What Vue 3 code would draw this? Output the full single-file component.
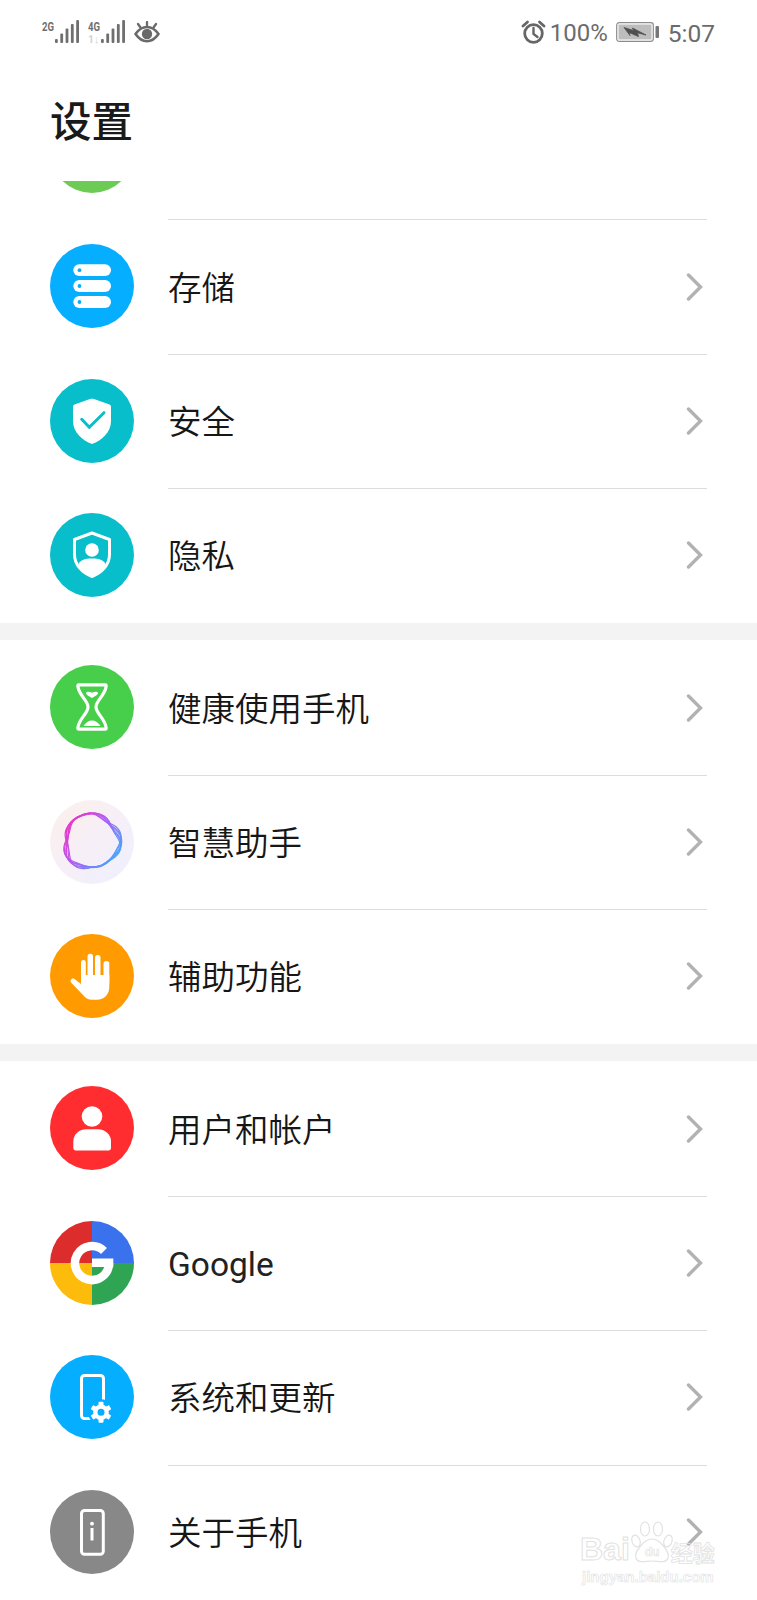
<template>
  <div class="page">
    <div class="status">
      <div class="status-left">
        <svg class="signal" width="38" height="28" viewBox="0 -4 38 28">
          <text x="0" y="10.500" class="net" textLength="12" lengthAdjust="spacingAndGlyphs">2G</text>
          <rect v-for="b in bars" :key="b.x" :x="b.x" :y="b.y" width="2.800" :height="23 - b.y" rx="1" />
        </svg>
        <svg class="signal" width="38" height="28" viewBox="0 -4 38 28">
          <text x="0" y="10.500" class="net" textLength="12" lengthAdjust="spacingAndGlyphs">4G</text>
          <text x="0" y="22.500" class="net net-faint" textLength="11" lengthAdjust="spacingAndGlyphs">1↓</text>
          <rect v-for="b in bars" :key="b.x" :x="b.x" :y="b.y" width="2.800" :height="23 - b.y" rx="1" />
        </svg>
        <svg width="26" height="22" viewBox="0 0 26 22">
          <path d="M1.500 13C5 8 9 6 13 6 17 6 21 8 24.500 13 21 18 17 20.300 13 20.300 9 20.300 5 18 1.500 13Z" fill="none" stroke="#6a6a6a" stroke-width="2.600" stroke-linejoin="round" />
          <circle cx="13" cy="13" r="5.200" fill="#6a6a6a" />
          <path d="M13 5V1M6.500 6.500 4 3M19.500 6.500 22 3" stroke="#6a6a6a" stroke-width="2.300" stroke-linecap="round" />
        </svg>
      </div>
      <div class="status-right">
        <svg width="25" height="24" viewBox="0 0 25 24">
          <circle cx="12.500" cy="13.500" r="8.800" fill="none" stroke="#666" stroke-width="2.800" />
          <path d="M12.500 8v6l4 3" fill="none" stroke="#666" stroke-width="2.400" stroke-linecap="round" />
          <path d="M2 6 6.500 2M23 6 18.500 2" stroke="#666" stroke-width="2.800" stroke-linecap="round" />
        </svg>
        <span class="pct">100%</span>
        <svg class="battery" width="44" height="20" viewBox="0 0 44 20">
          <rect x="0.700" y="0.700" width="36.600" height="18.600" rx="2.500" fill="#fff" stroke="#8c8c8c" stroke-width="1.200" />
          <rect x="2.500" y="2.500" width="33" height="15" fill="#bdbdbd" />
          <path d="M8 5.500 17.500 8.500 16.500 6 30 13 21.500 10.800 22.500 14.500 13 10.500 14 13.500Z" fill="#4f4f4f" stroke="#4f4f4f" stroke-width="0.800" stroke-linejoin="round" />
          <rect x="39.500" y="4" width="3.500" height="12" rx="1" fill="#777" />
        </svg>
        <span class="time">5:07</span>
      </div>
    </div>

    <h1 class="title">设置</h1>

    <div class="list">
      <div class="row row-cut">
        <div class="icon-cut"></div>
        <div class="row-body"></div>
      </div>

      <template v-for="(group, g) in groups" :key="g">
        <div v-if="g > 0" class="band"></div>
        <div v-for="(item, i) in group" :key="item.name" class="row">
          <svg class="icon" width="84" height="84" viewBox="0 0 84 84">
            <!-- storage -->
            <template v-if="item.icon === 'storage'">
              <circle cx="42" cy="42" r="42" fill="#05aeff" />
              <rect x="23.300" y="20.300" width="37.700" height="11.700" rx="5.800" fill="#fff" />
              <rect x="23.300" y="36" width="37.700" height="12" rx="6" fill="#fff" />
              <rect x="23.300" y="52" width="37.700" height="12" rx="6" fill="#fff" />
              <circle cx="29.500" cy="26.200" r="1.900" fill="#05aeff" />
              <circle cx="29.500" cy="42" r="1.900" fill="#05aeff" />
              <circle cx="29.500" cy="58" r="1.900" fill="#05aeff" />
            </template>
            <!-- security -->
            <template v-else-if="item.icon === 'security'">
              <circle cx="42" cy="42" r="42" fill="#08becb" />
              <path d="M40 20 24.500 25.500C23.500 26 23 26.800 23 28V42C23 53 32 61.500 42 65 52 61.500 61 53 61 42V28C61 26.800 60.500 26 59.500 25.500L44 20C42.500 19.500 41.500 19.500 40 20Z" fill="#fff" />
              <path d="M31.700 40.300 39.300 48.300 54 33.700" fill="none" stroke="#08becb" stroke-width="3" stroke-linecap="round" stroke-linejoin="round" />
            </template>
            <!-- privacy -->
            <template v-else-if="item.icon === 'privacy'">
              <circle cx="42" cy="42" r="42" fill="#08becb" />
              <path d="M42 20 59.500 26.500V41.500C59.500 52 51.500 60 42 63.500 32.500 60 24.500 52 24.500 41.500V26.500Z" fill="none" stroke="#fff" stroke-width="3" stroke-linejoin="round" />
              <circle cx="42" cy="37" r="6.800" fill="#fff" />
              <path d="M28 53C29 47 35 45.500 42 45.500 49 45.500 55 47 56 53 52 58.500 47 62 42 64 37 62 32 58.500 28 53Z" fill="#fff" />
            </template>
            <!-- hourglass -->
            <template v-else-if="item.icon === 'hourglass'">
              <circle cx="42" cy="42" r="42" fill="#47cf4b" />
              <path d="M29 19.800H55C56 19.800 56.500 20.500 56 22 54.500 31 46 35.500 46 42 46 48.500 54.500 53 56 62 56.500 63.500 56 64.200 55 64.200H29C28 64.200 27.500 63.500 28 62 29.500 53 38 48.500 38 42 38 35.500 29.500 31 28 22 27.500 20.500 28 19.800 29 19.800Z" fill="none" stroke="#fff" stroke-width="3.200" stroke-linejoin="round" />
              <path d="M42 33C38.500 31 35.500 29.500 36 27.800 37 26 40 26.500 42 27.800 44 26.500 47 26 48 27.800 48.500 29.500 45.500 31 42 33Z" fill="#fff" />
              <path d="M33.500 61C35.500 57.500 39 55.500 42 55.500 45 55.500 48.500 57.500 50.500 61Z" fill="#fff" />
            </template>
            <!-- assistant -->
            <template v-else-if="item.icon === 'assistant'">
              <defs>
                <linearGradient id="assistBg" x1="0" y1="0" x2="1" y2="1">
                  <stop offset="0" stop-color="#fbf0e8" />
                  <stop offset="0.5" stop-color="#f7eff8" />
                  <stop offset="1" stop-color="#ecf0fd" />
                </linearGradient>
                <linearGradient id="assistRing" gradientUnits="userSpaceOnUse" x1="14" y1="20" x2="70" y2="62">
                  <stop offset="0" stop-color="#f62cc0" />
                  <stop offset="0.45" stop-color="#b05cf0" />
                  <stop offset="1" stop-color="#35b0ff" />
                </linearGradient>
              </defs>
              <circle cx="42" cy="42" r="42" fill="url(#assistBg)" />
              <path v-for="(d, r) in ringLines" :key="r" :d="d" fill="none" stroke="url(#assistRing)" stroke-width="1.200" stroke-linejoin="round" />
            </template>
            <!-- hand -->
            <template v-else-if="item.icon === 'hand'">
              <circle cx="42" cy="42" r="42" fill="#ff9a00" />
              <rect x="31" y="26" width="4.800" height="24" rx="2.400" fill="#fff" />
              <rect x="37.500" y="19.700" width="5.500" height="28" rx="2.700" fill="#fff" />
              <rect x="45" y="21" width="5.500" height="28" rx="2.700" fill="#fff" />
              <rect x="53.500" y="27" width="5.800" height="24" rx="2.800" fill="#fff" />
              <path d="M31 41H59.300V53C59.300 60.500 54 65.700 47 65.700H42C38 65.700 35.500 64 33 61L21 48.500C19.500 46.500 22 43.500 24.500 45L31 50Z" fill="#fff" />
            </template>
            <!-- person -->
            <template v-else-if="item.icon === 'person'">
              <circle cx="42" cy="42" r="42" fill="#ff2d30" />
              <circle cx="42" cy="30.500" r="10.300" fill="#fff" />
              <path d="M23.300 62V55C23.300 48 30 43.300 36 43.300H48C54 43.300 61 48 61 55V62C61 63.500 60 64.500 58.500 64.500H25.800C24.300 64.500 23.300 63.500 23.300 62Z" fill="#fff" />
            </template>
            <!-- google -->
            <template v-else-if="item.icon === 'google'">
              <path d="M42 42V0A42 42 0 0 0 0 42Z" fill="#dd2c2c" />
              <path d="M42 42V0A42 42 0 0 1 84 42Z" fill="#3a72ee" />
              <path d="M42 42H0A42 42 0 0 0 42 84Z" fill="#fdbc0b" />
              <path d="M42 42H84A42 42 0 0 1 42 84Z" fill="#2fa553" />
              <path d="M54 30A17 17 0 1 0 59 42" fill="none" stroke="#fff" stroke-width="8.500" />
              <rect x="42" y="37.500" width="21.300" height="8.500" fill="#fff" />
            </template>
            <!-- system -->
            <template v-else-if="item.icon === 'system'">
              <circle cx="42" cy="42" r="42" fill="#05aeff" />
              <rect x="31.500" y="20.500" width="22" height="43" rx="3" fill="none" stroke="#fff" stroke-width="3" />
              <circle cx="51" cy="57.300" r="13" fill="#05aeff" />
              <rect v-for="a in gearTeeth" :key="a" x="48.500" y="46.800" width="5" height="21" rx="1" fill="#fff" :transform="`rotate(${a} 51 57.300)`" />
              <circle cx="51" cy="57.300" r="7.800" fill="#fff" />
              <circle cx="51" cy="57.300" r="3.500" fill="#05aeff" />
            </template>
            <!-- about -->
            <template v-else>
              <circle cx="42" cy="42" r="42" fill="#888" />
              <rect x="31.500" y="20.500" width="21.800" height="43.700" rx="3" fill="none" stroke="#fff" stroke-width="3" />
              <circle cx="42" cy="33.700" r="1.900" fill="#fff" />
              <rect x="40.500" y="38" width="3" height="12.500" fill="#fff" />
            </template>
          </svg>
          <div class="row-body" :class="{ 'row-body--last': i === group.length - 1 }">
            <span class="name" :class="{ 'name--latin': item.name === 'Google' }">{{ item.name }}</span>
            <svg class="chev" width="17" height="28" viewBox="0 0 17 28">
              <path d="M2.500 2 14.500 14 2.500 26" fill="none" stroke="#b2b2b2" stroke-width="3.400" stroke-linecap="round" stroke-linejoin="miter" />
            </svg>
          </div>
        </div>
      </template>
    </div>

    <div class="watermark">
      <div class="wm-top">
        <span class="wm-big">Bai</span>
        <svg width="44" height="46" viewBox="0 0 44 46">
          <g fill="none" stroke="#e2e2e2" stroke-width="1.200">
            <ellipse cx="6" cy="22" rx="4" ry="6" transform="rotate(-20 6 22)" />
            <ellipse cx="15" cy="10" rx="4.500" ry="7" />
            <ellipse cx="28" cy="10" rx="4.500" ry="7" />
            <ellipse cx="38" cy="22" rx="4" ry="6" transform="rotate(20 38 22)" />
            <path d="M22 20C30 20 40 33 38 39 36 45 28 42 22 42 16 42 8 45 6 39 4 33 14 20 22 20Z" />
          </g>
          <text x="22" y="37" text-anchor="middle" class="wm-du">du</text>
        </svg>
        <span class="wm-cn">经验</span>
      </div>
      <div class="wm-url">jingyan.baidu.com</div>
    </div>
  </div>
</template>

<script setup>
const bars = [
  { x: 13, y: 19 },
  { x: 18.300, y: 13.500 },
  { x: 23.600, y: 8.500 },
  { x: 28.900, y: 4 },
  { x: 34.200, y: 0 },
]

const gearTeeth = [0, 60, 120]

// wobbly closed lines for the assistant ring
const ringLine = (phase, base) => {
  let d = ''
  for (let s = 0; s < 120; s++) {
    const t = (s / 120) * Math.PI * 2
    const r = base + 1.8 * Math.sin(3 * t + phase) + 1.3 * Math.sin(5 * t + phase * 1.7)
    const x = 41.7 + r * Math.cos(t)
    const y = 41.2 + r * Math.sin(t)
    d += `${s === 0 ? 'M' : 'L'}${x.toFixed(2)} ${y.toFixed(2)}`
  }
  return d + 'Z'
}

const ringLines = [
  ringLine(0.2, 26.8),
  ringLine(0.5, 27),
  ringLine(0.8, 26.6),
  ringLine(1.1, 27.2),
  ringLine(1.5, 26.8),
  ringLine(1.9, 27),
]

const groups = [
  [
    { name: '存储', icon: 'storage' },
    { name: '安全', icon: 'security' },
    { name: '隐私', icon: 'privacy' },
  ],
  [
    { name: '健康使用手机', icon: 'hourglass' },
    { name: '智慧助手', icon: 'assistant' },
    { name: '辅助功能', icon: 'hand' },
  ],
  [
    { name: '用户和帐户', icon: 'person' },
    { name: 'Google', icon: 'google' },
    { name: '系统和更新', icon: 'system' },
    { name: '关于手机', icon: 'about' },
  ],
]
</script>

<style>
html,
body {
  background: #fff;
}
</style>

<style scoped>
.page {
  position: relative;
  width: 757px;
  height: 1600px;
  overflow: hidden;
  background: #fff;
  font-family: Roboto, 'Noto Sans CJK SC', sans-serif;
}

.status {
  display: flex;
  justify-content: space-between;
  align-items: center;
  height: 64px;
  padding: 0 42px;
}

.status-left {
  display: flex;
  align-items: center;
  gap: 8px;
}

.signal {
  margin-top: -4px;
}

.signal rect {
  fill: #6f6f6f;
}

.net {
  font: 700 13.5px Roboto, sans-serif;
  fill: #6f6f6f;
}

.net-faint {
  font-size: 11px;
  fill: #d2d2d2;
}

.status-right {
  display: flex;
  align-items: center;
  color: #6b6b6b;
  font-size: 24px;
}

.pct {
  margin-left: 4px;
  padding-top: 2px;
}

.battery {
  margin-left: 8px;
}

.time {
  margin-left: 8px;
  padding-top: 2px;
  font-size: 24.5px;
}

.title {
  margin: 0;
  height: 117px;
  padding: 30px 0 0 50px;
  box-sizing: border-box;
  font: 500 41.5px/50px 'Noto Sans CJK SC', sans-serif;
  color: #1a1a1a;
}

.list {
  display: flex;
  flex-direction: column;
}

.row {
  display: flex;
  height: 134.4px;
  padding: 0 50px;
  flex-shrink: 0;
}

.row-cut {
  height: 38.4px;
  position: relative;
}

.icon-cut {
  width: 84px;
  height: 12px;
  flex-shrink: 0;
  overflow: hidden;
  position: relative;
}

.icon-cut::before {
  content: '';
  position: absolute;
  left: 0;
  bottom: 0;
  width: 84px;
  height: 84px;
  border-radius: 50%;
  background: #6ccb55;
}

.icon {
  flex-shrink: 0;
  align-self: center;
  margin-top: -0.4px;
}

.row-body {
  flex: 1;
  display: flex;
  align-items: center;
  justify-content: space-between;
  margin: 0 0 -1px 34px;
  padding-right: 4px;
  border-bottom: 1px solid #dcdcdc;
}

.row-body--last {
  margin-bottom: 0;
  border-bottom: none;
}

.name {
  padding-top: 4px;
  font: 350 33.5px/44px Roboto, 'Noto Sans CJK SC', sans-serif;
  color: #161616;
}

.name--latin {
  font-weight: 400;
  color: #222;
}

.band {
  height: 17.8px;
  flex-shrink: 0;
  background: #f3f3f3;
}

.watermark {
  position: absolute;
  left: 580px;
  top: 1517px;
  width: 140px;
  color: transparent;
}

.wm-top {
  display: flex;
  align-items: flex-end;
  height: 48px;
}

.wm-big {
  font: 700 32px/32px 'Liberation Sans', sans-serif;
  -webkit-text-stroke: 1px #e2e2e2;
}

.wm-du {
  font: 700 12px 'Liberation Sans', sans-serif;
  fill: none;
  stroke: #e2e2e2;
  stroke-width: 0.6;
}

.wm-cn {
  margin-left: -3px;
  font: 700 22px/28px 'Noto Sans CJK SC', sans-serif;
  -webkit-text-stroke: 0.8px #e2e2e2;
}

.wm-url {
  margin: 3px 0 0 2px;
  font: 700 15px/18px 'Liberation Sans', sans-serif;
  -webkit-text-stroke: 0.6px #e2e2e2;
  white-space: nowrap;
}
</style>
